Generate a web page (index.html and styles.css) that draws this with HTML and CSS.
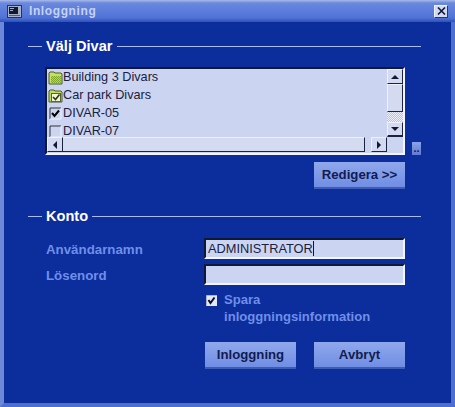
FILE: index.html
```html
<!DOCTYPE html>
<html lang="sv">

<head>
  <meta charset="UTF-8" />
  <title>Inloggning</title>
  <link rel="stylesheet" href="styles.css">
</head>

<body>
  <div class="window">
    <!-- title bar -->
    <div class="titlebar">
      <svg class="app-icon" width="15" height="13" viewBox="0 0 15 13">
        <rect x="0.5" y="0.5" width="14" height="12" fill="#a9b0c4" stroke="#2c3350" />
        <rect x="2" y="2" width="9" height="7" fill="#111a33" />
        <rect x="3" y="3" width="4" height="1" fill="#9fb0d8" />
        <rect x="3" y="5" width="3" height="1" fill="#9fb0d8" />
        <rect x="2" y="10" width="11" height="1" fill="#565e78" />
      </svg>
      <span class="title">Inloggning</span>
      <div class="close">
        <svg width="9" height="8" viewBox="0 0 9 8">
          <path d="M1 0.5 L8 7.5 M8 0.5 L1 7.5" stroke="#10183a" stroke-width="1.6" />
        </svg>
      </div>
    </div>

    <div class="content">
      <!-- divar list -->
      <div class="legend"><span class="dash"></span><span>Välj Divar</span><span class="rule"></span></div>
      <div class="list-row">
        <div class="listbox">
          <ul class="items">
            <li>
              <svg width="15" height="15" viewBox="0 0 15 15">
                <defs>
                  <pattern id="dither" width="2" height="2" patternUnits="userSpaceOnUse">
                    <rect width="2" height="2" fill="#b4d84c" />
                    <rect width="1" height="1" fill="#7ea82c" />
                    <rect x="1" y="1" width="1" height="1" fill="#7ea82c" />
                  </pattern>
                </defs>
                <path d="M1 3 L2 2 H6 L7 3 H13 L14 4 V14 H1 Z" fill="#c8e060" stroke="#4e5a28" />
                <path d="M3 6 H13 V13 H3 Z" fill="url(#dither)" />
              </svg>
              <span>Building 3 Divars</span>
            </li>
            <li>
              <svg width="15" height="15" viewBox="0 0 15 15">
                <path d="M1 3 L2 2 H6 L7 3 H13 L14 4 V14 H1 Z" fill="#c4dc5c" stroke="#4e5a28" />
                <rect x="3.5" y="5.5" width="9" height="8" fill="#f2f6d8" stroke="#5a6430" />
                <path d="M5 9 L7.5 11.5 L11.5 6.5" fill="none" stroke="#2e3a14" stroke-width="1.6" />
              </svg>
              <span>Car park Divars</span>
            </li>
            <li>
              <svg width="15" height="15" viewBox="0 0 15 15">
                <path d="M2 13 V2 H13" fill="none" stroke="#333" />
                <path d="M13 2 V13 H2" fill="none" stroke="#eef1fb" />
                <path d="M4 7 L6.5 10 L11 4.5" fill="none" stroke="#000" stroke-width="2" />
              </svg>
              <span>DIVAR-05</span>
            </li>
            <li>
              <svg width="15" height="15" viewBox="0 0 15 15">
                <path d="M2 13 V2 H13" fill="none" stroke="#333" />
                <path d="M13 2 V13 H2" fill="none" stroke="#eef1fb" />
              </svg>
              <span>DIVAR-07</span>
            </li>
          </ul>
          <div class="vscroll">
            <div class="sbtn sbtn-v"><i class="arrow up"></i></div>
            <div class="vthumb"></div>
            <div class="vtrack"></div>
            <div class="sbtn sbtn-v sbtn-down"><i class="arrow down"></i></div>
          </div>
          <div class="hscroll">
            <div class="sbtn sbtn-h"><i class="arrow left"></i></div>
            <div class="hthumb"></div>
            <div class="htrack"></div>
            <div class="sbtn sbtn-h"><i class="arrow right"></i></div>
          </div>
          <div class="corner"></div>
        </div>
        <div class="more">..</div>
      </div>
      <div class="actions edit-row">
        <button class="btn">Redigera &gt;&gt;</button>
      </div>

      <!-- account -->
      <div class="legend konto"><span class="dash"></span><span>Konto</span><span class="rule"></span></div>
      <div class="form">
        <label>Användarnamn</label>
        <div class="input">ADMINISTRATOR<span class="caret"></span></div>
        <label>Lösenord</label>
        <div class="input"></div>
        <div class="remember">
          <svg width="11" height="11" viewBox="0 0 11 11">
            <rect width="11" height="11" fill="#e4e8f6" />
            <path d="M0 11 V0 H11" fill="none" stroke="#7a7f92" stroke-width="1" />
            <path d="M2.5 5 L4.5 8 L8.5 2.5" fill="none" stroke="#0a0f28" stroke-width="2" />
          </svg>
          <span>Spara<br />inloggningsinformation</span>
        </div>
      </div>
      <div class="actions login-row">
        <button class="btn">Inloggning</button>
        <button class="btn">Avbryt</button>
      </div>
    </div>
  </div>
</body>

</html>
```

FILE: styles.css
```css
* {
  margin: 0;
  padding: 0;
  box-sizing: border-box;
}

body {
  width: 455px;
  height: 407px;
  overflow: hidden;
  font-family: "Liberation Sans", Arial, sans-serif;
  background: #0c2d9c;
}

ul {
  list-style: none;
}

.window {
  width: 455px;
  height: 407px;
  display: flex;
  flex-direction: column;
  background: #0c2d9c;
  border-left: 4px solid #6c88d8;
  border-right: 4px solid #4f6fce;
  border-bottom: 4px solid #4f6fce;
}

.titlebar {
  height: 22px;
  margin: 0 -4px;
  padding: 0 7px;
  display: flex;
  align-items: center;
  background: linear-gradient(#a9bbe9 0, #6a88de 3px, #4f72d8 18px, #2f50b4 22px);
}

.app-icon {
  flex: none;
}

.title {
  margin-left: 7px;
  font-size: 12px;
  font-weight: bold;
  letter-spacing: 0.6px;
  color: #c6d2f2;
}

.close {
  width: 14px;
  height: 13px;
  margin-left: auto;
  display: flex;
  align-items: center;
  justify-content: center;
  background: #d4daf0;
  border: 1px solid;
  border-color: #eef1fb #2a3570 #2a3570 #eef1fb;
}

.content {
  flex: 1;
  padding: 16px 30px 0 24px;
}

.legend {
  height: 16px;
  display: flex;
  align-items: center;
  gap: 4px;
  font-size: 14.6px;
  font-weight: bold;
  color: #fff;
}

.legend .dash {
  width: 14px;
  height: 1px;
  background: #a9bbe9;
}

.legend .rule {
  flex: 1;
  height: 1px;
  background: #a9bbe9;
}

.konto {
  margin-top: 19px;
}

.list-row {
  margin: 13px 0 0 17px;
  display: flex;
  align-items: flex-end;
  gap: 7px;
}

.listbox {
  width: 360px;
  height: 88px;
  display: grid;
  grid-template-columns: 340px 16px;
  grid-template-rows: 68px 15px;
  background: #cbd5f1;
  border: 2px solid;
  border-color: #10183a #f2f5fd #f2f5fd #10183a;
}

.items {
  overflow: hidden;
  font-size: 12.7px;
  color: #1a2140;
}

.items li {
  height: 18px;
  padding-left: 1px;
  display: flex;
  align-items: center;
}

.items li:first-child {
  margin-top: -1px;
}

.vscroll {
  display: flex;
  flex-direction: column;
}

.hscroll {
  display: flex;
}

.corner {
  background: #cbd5f1;
}

.sbtn {
  flex: none;
  display: flex;
  align-items: center;
  justify-content: center;
  background: #d4daf0;
  border: 1px solid;
  border-color: #eef1fb #1c2340 #1c2340 #eef1fb;
}

.sbtn-v {
  height: 15px;
}

.sbtn-down {
  border-bottom-width: 2px;
}

.sbtn-h {
  width: 16px;
}

.vthumb {
  height: 28px;
  background: #d4daf0;
  border: 1px solid;
  border-color: #eef1fb #1c2340 #1c2340 #eef1fb;
}

.vtrack {
  flex: 1;
  background: repeating-conic-gradient(#eef1fb 0 25%, #b8c2e0 0 50%) 0 0 / 2px 2px;
}

.hthumb {
  flex: 1;
  background: #d4daf0;
  border-right: 1px solid #1c2340;
  border-bottom: 1px solid #1c2340;
  border-top: 1px solid #eef1fb;
}

.htrack {
  width: 6px;
  background: #cbd5f1;
}

.arrow {
  width: 0;
  height: 0;
  border: 4px solid transparent;
}

.arrow.up {
  border-top: 0;
  border-bottom-color: #10183a;
}

.arrow.down {
  border-bottom: 0;
  border-top-color: #10183a;
}

.arrow.left {
  border-left: 0;
  border-right-color: #10183a;
}

.arrow.right {
  border-right: 0;
  border-left-color: #10183a;
}

.more {
  width: 12px;
  height: 13px;
  font-size: 11px;
  font-weight: bold;
  line-height: 13px;
  text-align: center;
  color: #10183a;
  background: linear-gradient(#8aa3ea, #5f7ad0);
}

.actions {
  display: flex;
  justify-content: flex-end;
  gap: 18px;
  width: 377px;
}

.edit-row {
  margin-top: 7px;
}

.login-row {
  margin-top: 17px;
}

.btn {
  width: 91px;
  height: 27px;
  border: none;
  border-bottom: 2px solid #3f5cb4;
  font-family: inherit;
  font-size: 13.2px;
  font-weight: bold;
  color: #121c50;
  background: linear-gradient(#90a8ec, #6f8ee4);
}

.form {
  margin: 14px 0 0 18px;
  width: 359px;
  display: grid;
  grid-template-columns: 158px 201px;
  row-gap: 5px;
  align-items: center;
  font-size: 13.3px;
  font-weight: bold;
  color: #6f8fe8;
}

.form label {
  padding-top: 2px;
}

.input {
  height: 21px;
  padding-left: 2px;
  display: flex;
  align-items: center;
  font-size: 12.8px;
  font-weight: normal;
  color: #1a2140;
  background: #cbd5f1;
  border: 2px solid;
  border-color: #10183a #f2f5fd #f2f5fd #10183a;
}

.caret {
  width: 1px;
  height: 15px;
  background: #10183a;
}

.remember {
  grid-column: 2;
  margin-top: 1px;
  padding-left: 2px;
  display: flex;
  align-items: flex-start;
  gap: 7px;
  font-size: 13.1px;
  line-height: 17px;
}

.remember svg {
  margin-top: 4px;
  flex: none;
}
```
